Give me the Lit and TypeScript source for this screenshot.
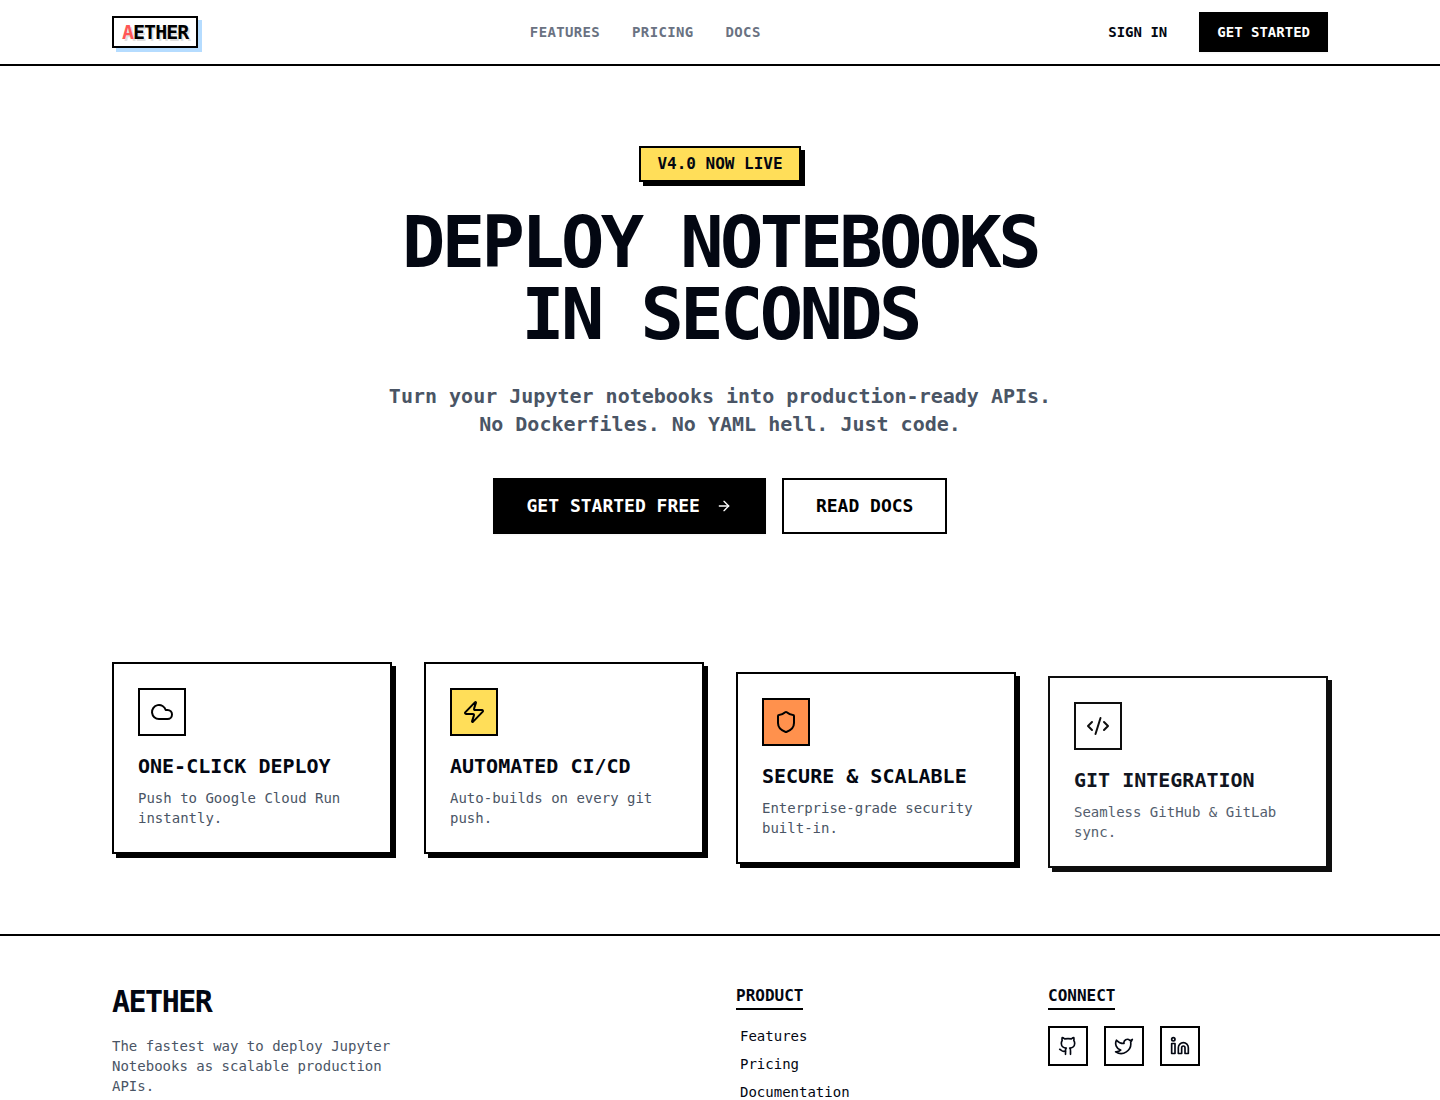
import { LitElement, html, css, svg, SVGTemplateResult } from "lit";
import { customElement, property } from "lit/decorators.js";
import { styleMap } from "lit/directives/style-map.js";

const glyphs: Record<string, SVGTemplateResult> = {
  arrow: svg`<path d="M5 12h14"/><path d="m12 5 7 7-7 7"/>`,
  cloud: svg`<path d="M17.5 19H9a7 7 0 1 1 6.71-9h1.79a4.5 4.5 0 1 1 0 9Z"/>`,
  zap: svg`<path d="M4 14a1 1 0 0 1-.78-1.63l9.9-10.2a.5.5 0 0 1 .86.46l-1.92 6.02A1 1 0 0 0 13 10h7a1 1 0 0 1 .78 1.63l-9.9 10.2a.5.5 0 0 1-.86-.46l1.92-6.02A1 1 0 0 0 11 14z"/>`,
  shield: svg`<path d="M20 13c0 5-3.5 7.5-7.66 8.95a1 1 0 0 1-.67-.01C7.5 20.5 4 18 4 13V6a1 1 0 0 1 1-1c2 0 4.5-1.2 6.24-2.72a1.17 1.17 0 0 1 1.52 0C14.51 3.81 17 5 19 5a1 1 0 0 1 1 1z"/>`,
  code: svg`<path d="m18 16 4-4-4-4"/><path d="m6 8-4 4 4 4"/><path d="m14.5 4-5 16"/>`,
  github: svg`<path d="M15 22v-4a4.8 4.8 0 0 0-1-3.5c3 0 6-2 6-5.5.08-1.25-.27-2.48-1-3.5.28-1.15.28-2.35 0-3.5 0 0-1 0-3 1.5-2.64-.5-5.36-.5-8 0C6 2 5 2 5 2c-.3 1.15-.3 2.35 0 3.5A5.403 5.403 0 0 0 4 9c0 3.5 3 5.5 6 5.5-.39.49-.68 1.05-.85 1.65-.17.6-.22 1.23-.15 1.85v4"/><path d="M9 18c-4.51 2-5-2-7-2"/>`,
  twitter: svg`<path d="M22 4s-.7 2.1-2 3.4c1.6 10-9.4 17.3-18 11.6 2.2.1 4.4-.6 6-2C3 15.5.5 9.6 3 5c2.2 2.6 5.6 4.1 9 4-.9-4.2 4-6.6 7-3.8 1.1 0 3-1.2 3-1.2z"/>`,
  linkedin: svg`<path d="M16 8a6 6 0 0 1 6 6v7h-4v-7a2 2 0 0 0-2-2 2 2 0 0 0-2 2v7h-4v-7a6 6 0 0 1 6-6z"/><rect width="4" height="12" x="2" y="9"/><circle cx="4" cy="4" r="2"/>`,
};

@customElement("line-icon")
class LineIcon extends LitElement {
  @property() name = "cloud";

  static styles = css`
    :host {
      display: block;
      width: 24px;
      height: 24px;
    }
    .glyph {
      display: block;
      width: 100%;
      height: 100%;
      fill: none;
      stroke: currentColor;
      stroke-width: 2;
      stroke-linecap: round;
      stroke-linejoin: round;
    }
  `;

  render() {
    return html`<svg class="glyph" viewBox="0 0 24 24" aria-hidden="true">${glyphs[this.name]}</svg>`;
  }
}

interface Feature {
  icon: string;
  tone: string;
  title: string;
  text: string;
  shift: number;
  opacity: number;
}

// shift and opacity hold the staggered entrance state of each card
const features: Feature[] = [
  { icon: "cloud", tone: "plain", title: "ONE-CLICK DEPLOY", text: "Push to Google Cloud Run instantly.", shift: 0, opacity: 1 },
  { icon: "zap", tone: "yellow", title: "AUTOMATED CI/CD", text: "Auto-builds on every git push.", shift: 0, opacity: 1 },
  { icon: "shield", tone: "orange", title: "SECURE & SCALABLE", text: "Enterprise-grade security built-in.", shift: 10, opacity: 1 },
  { icon: "code", tone: "plain", title: "GIT INTEGRATION", text: "Seamless GitHub & GitLab sync.", shift: 14, opacity: 0.94 },
];

const socials = [
  { icon: "github", label: "GitHub" },
  { icon: "twitter", label: "Twitter" },
  { icon: "linkedin", label: "LinkedIn" },
];

@customElement("app-root")
class AppRoot extends LitElement {
  static styles = css`
    :host {
      display: block;
      background: #fff;
      color: #030712;
      font-family: Menlo, "DejaVu Sans Mono", monospace;
      font-size: 16px;
      line-height: 24px;
    }
    *,
    *::before,
    *::after {
      box-sizing: border-box;
    }
    h1, h2, h3, p, ul {
      margin: 0;
      padding: 0;
    }
    ul {
      list-style: none;
    }
    a {
      color: inherit;
      text-decoration: none;
    }
    button {
      margin: 0;
      font: inherit;
      cursor: pointer;
    }
    .wrap {
      max-width: 1280px;
      margin: 0 auto;
      padding: 0 32px;
    }
    .top {
      border-bottom: 2px solid #000;
    }
    .bar {
      display: flex;
      align-items: center;
      justify-content: space-between;
      min-height: 64px;
    }
    .logo {
      padding: 0 8px;
      border: 2px solid #000;
      background: #fff;
      box-shadow: 4px 4px 0 #b5dcff;
      color: #000;
      font-size: 20px;
      line-height: 28px;
      font-weight: 700;
      letter-spacing: -0.05em;
      text-shadow: 2px 2px 0 rgba(0, 0, 0, 0.12);
    }
    .logo-mark {
      color: #ff5757;
    }
    .nav {
      display: flex;
      gap: 32px;
      color: #6a7282;
      font-size: 14px;
      line-height: 20px;
      font-weight: 700;
      letter-spacing: 0.025em;
    }
    .actions {
      display: flex;
      align-items: center;
      gap: 16px;
    }
    .btn {
      display: inline-flex;
      align-items: center;
      justify-content: center;
      gap: 16px;
      border: 2px solid #000;
      border-radius: 0;
      font-weight: 700;
    }
    .small {
      height: 40px;
      padding: 0 16px;
      font-size: 14px;
      line-height: 20px;
    }
    .large {
      height: 56px;
      padding: 0 32px;
      font-size: 18px;
      line-height: 28px;
    }
    .ghost {
      border: 0;
      background: transparent;
      color: #030712;
    }
    .solid {
      background: #000;
      color: #fff;
      box-shadow: 0 1px 2px rgba(0, 0, 0, 0.05);
    }
    .outline {
      background: #fff;
      color: #000;
    }
    .arrow {
      width: 16px;
      height: 16px;
    }
    .hero {
      display: flex;
      flex-direction: column;
      align-items: center;
      padding-top: 80px;
      padding-bottom: 128px;
      text-align: center;
    }
    .badge {
      padding: 4px 16px;
      border: 2px solid #000;
      background: #ffde59;
      box-shadow: 4px 4px 0 #000;
      font-weight: 700;
    }
    .headline {
      max-width: 896px;
      margin-top: 24px;
      font-size: 72px;
      line-height: 72px;
      font-weight: 700;
      letter-spacing: -0.05em;
    }
    .lead {
      max-width: 672px;
      margin-top: 32px;
      color: #4a5565;
      font-size: 20px;
      line-height: 28px;
      font-weight: 700;
    }
    .cta {
      display: flex;
      gap: 16px;
      margin-top: 40px;
    }
    .features {
      padding-bottom: 80px;
    }
    .grid {
      display: grid;
      grid-template-columns: repeat(4, minmax(0, 1fr));
      gap: 32px;
    }
    .card {
      padding: 24px;
      border: 2px solid #000;
      background: #fff;
      box-shadow: 4px 4px 0 #000;
    }
    .tile {
      display: flex;
      align-items: center;
      justify-content: center;
      width: 48px;
      height: 48px;
      border: 2px solid #000;
      color: #000;
    }
    .plain {
      background: #fff;
    }
    .yellow {
      background: #ffde59;
    }
    .orange {
      background: #ff914d;
    }
    .card-title {
      margin-top: 16px;
      font-size: 20px;
      line-height: 28px;
      font-weight: 700;
    }
    .card-text {
      margin-top: 8px;
      color: #4a5565;
      font-size: 14px;
      line-height: 20px;
    }
    .foot {
      padding: 48px 0;
      border-top: 2px solid #000;
    }
    .about {
      grid-column: span 2;
    }
    .foot-name {
      font-size: 30px;
      line-height: 36px;
      font-weight: 700;
      letter-spacing: -0.05em;
    }
    .foot-text {
      max-width: 304px;
      margin-top: 16px;
      color: #4a5565;
      font-size: 14px;
      line-height: 20px;
    }
    .foot-title {
      width: fit-content;
      margin-bottom: 16px;
      border-bottom: 2px solid #000;
      font-size: 16px;
      line-height: 24px;
      font-weight: 700;
    }
    .links {
      display: grid;
      gap: 8px;
      padding: 0 4px;
      font-size: 14px;
      line-height: 20px;
    }
    .socials {
      display: flex;
      gap: 16px;
    }
    .social {
      display: flex;
      align-items: center;
      justify-content: center;
      width: 40px;
      height: 40px;
      border: 2px solid #000;
    }
    .social-icon {
      width: 20px;
      height: 20px;
    }
    @media (max-width: 1000px) {
      .grid {
        grid-template-columns: repeat(2, minmax(0, 1fr));
      }
    }
  `;

  render() {
    return html`
      <header class="top">
        <div class="wrap bar">
          <a class="logo" href="#"><span class="logo-mark">A</span>ETHER</a>
          <nav class="nav">
            <a href="#features">FEATURES</a>
            <a href="#pricing">PRICING</a>
            <a href="#docs">DOCS</a>
          </nav>
          <div class="actions">
            <button class="btn small ghost" type="button">SIGN IN</button>
            <button class="btn small solid" type="button">GET STARTED</button>
          </div>
        </div>
      </header>
      <main>
        <section class="wrap hero">
          <div class="badge">V4.0 NOW LIVE</div>
          <h1 class="headline">DEPLOY NOTEBOOKS<br />IN SECONDS</h1>
          <p class="lead">
            Turn your Jupyter notebooks into production-ready APIs. No Dockerfiles. No YAML hell. Just code.
          </p>
          <div class="cta">
            <button class="btn large solid" type="button">
              GET STARTED FREE<line-icon class="arrow" name="arrow"></line-icon>
            </button>
            <button class="btn large outline" type="button">READ DOCS</button>
          </div>
        </section>
        <section class="wrap features" id="features">
          <div class="grid">
            ${features.map(
              (f) => html`
                <article
                  class="card"
                  style=${styleMap({ transform: `translateY(${f.shift}px)`, opacity: String(f.opacity) })}
                >
                  <div class="tile ${f.tone}"><line-icon name=${f.icon}></line-icon></div>
                  <h3 class="card-title">${f.title}</h3>
                  <p class="card-text">${f.text}</p>
                </article>
              `
            )}
          </div>
        </section>
      </main>
      <footer class="foot">
        <div class="wrap grid">
          <div class="about">
            <h2 class="foot-name">AETHER</h2>
            <p class="foot-text">The fastest way to deploy Jupyter Notebooks as scalable production APIs.</p>
          </div>
          <div>
            <h3 class="foot-title">PRODUCT</h3>
            <ul class="links">
              <li><a href="#features">Features</a></li>
              <li><a href="#pricing">Pricing</a></li>
              <li><a href="#docs">Documentation</a></li>
            </ul>
          </div>
          <div>
            <h3 class="foot-title">CONNECT</h3>
            <div class="socials">
              ${socials.map(
                (s) => html`
                  <a class="social" href="#${s.icon}" aria-label=${s.label}>
                    <line-icon class="social-icon" name=${s.icon}></line-icon>
                  </a>
                `
              )}
            </div>
          </div>
        </div>
      </footer>
    `;
  }
}
